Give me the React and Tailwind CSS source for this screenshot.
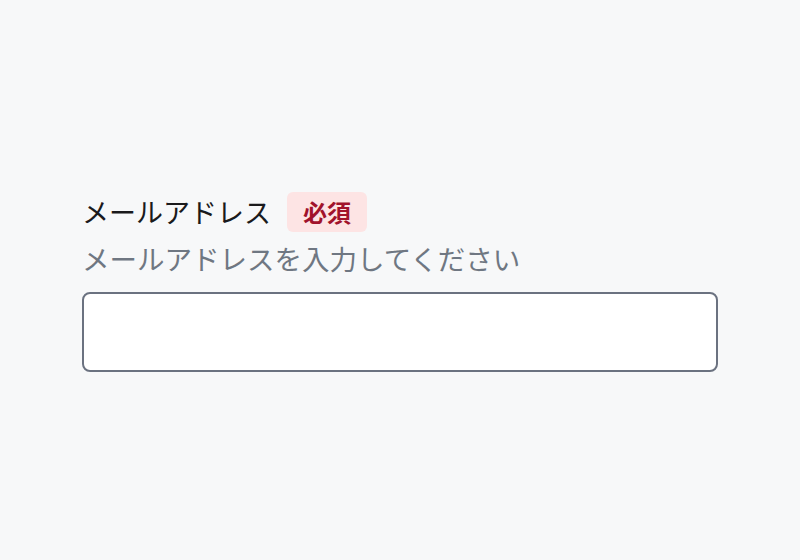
export default function App() {
  return (
    <div
      className="flex min-h-screen w-full justify-center bg-[#f7f8f9] pt-[192px]"
      style={{ fontFamily: '"Noto Sans CJK JP", "Noto Sans", sans-serif' }}
    >
      <div className="flex w-[636px] flex-col">
        {/* Label + required badge */}
        <label htmlFor="email" className="flex items-center gap-4">
          <span className="text-[27px] leading-[40px] text-[#1a1a1c]">メールアドレス</span>
          <span className="rounded-md bg-[#fde4e4] px-4 text-[24px] font-bold leading-[40px] text-[#a1122b]">
            必須
          </span>
        </label>
        <p className="mt-2 text-[27.5px] leading-[36px] text-[#6f7782]">
          メールアドレスを入力してください
        </p>
        <input
          id="email"
          type="email"
          className="mt-4 h-[80px] w-full rounded-lg border-2 border-[#6b7280] bg-white px-4 text-[26px] outline-none"
        />
      </div>
    </div>
  );
}
